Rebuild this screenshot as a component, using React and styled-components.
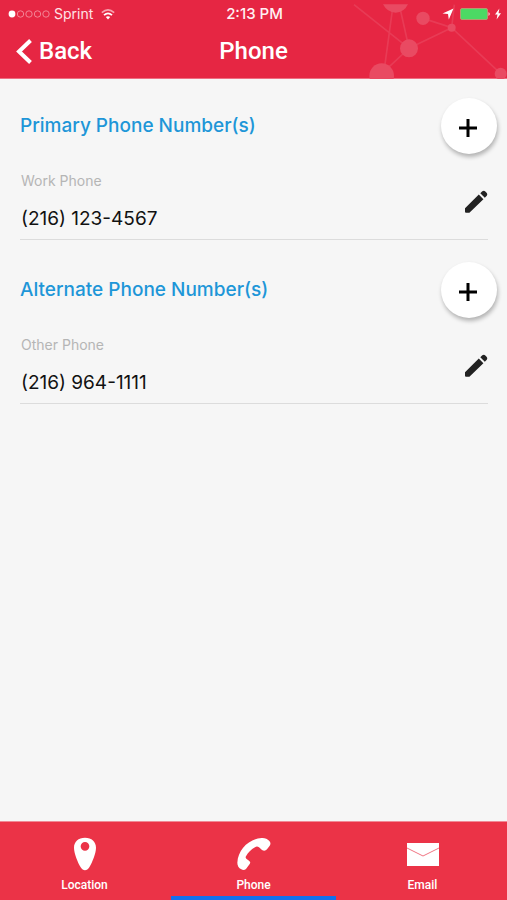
import React from "react";
import styled, { createGlobalStyle } from "styled-components";

const GlobalStyle = createGlobalStyle`
  *, *::before, *::after { box-sizing: border-box; }
  body { margin: 0; background: #f6f6f6; }
`;

const Screen = styled.div`
  display: flex;
  flex-direction: column;
  min-height: 100vh;
  background: #f6f6f6;
  color: #111;
  font-family: Inter, "Liberation Sans", sans-serif;
`;

const Header = styled.header`
  position: relative;
  background: #e62643;
  border-bottom: 1px solid #ee6e82;
  color: #fff;
`;

const Network = styled.svg`
  position: absolute;
  top: 0;
  right: 0;
  width: 167px;
  height: 79px;
  fill: #e94a62;
  stroke: #e94a62;
`;

const TripleRow = styled.div`
  position: relative;
  display: grid;
  grid-template-columns: 1fr auto 1fr;
  align-items: center;
`;

const StatusBar = styled(TripleRow)`
  height: 28px;
  padding: 0 6px 0 8px;
  font-size: 14px;
  line-height: 16px;
`;

const Carrier = styled.div`
  display: flex;
  align-items: center;
  gap: 4px;
  color: #ffe3e7;
`;

const CarrierName = styled.span`
  margin-right: 4px;
`;

const Clock = styled.time`
  font-size: 15px;
  font-weight: 500;
  color: #fff0f2;
`;

const StatusIcons = styled.div`
  display: flex;
  align-items: center;
  justify-content: flex-end;
  gap: 4px;
`;

const NavBar = styled(TripleRow)`
  height: 50px;
  padding: 0 16px 4px;
  font-family: Roboto, "Liberation Sans", sans-serif;
`;

const BackButton = styled.button`
  display: flex;
  align-items: center;
  gap: 7px;
  justify-self: start;
  padding: 0;
  border: 0;
  background: none;
  color: #fff;
  font: 500 24px/30px Roboto, "Liberation Sans", sans-serif;
  cursor: pointer;
`;

const Title = styled.h1`
  margin: 0;
  font-size: 24px;
  line-height: 30px;
  font-weight: 500;
`;

const Content = styled.main`
  flex: 1;
  padding: 19px 10px 0 20px;
`;

const Section = styled.section`
  margin-bottom: 22px;
`;

const SectionHead = styled.div`
  display: flex;
  align-items: center;
  justify-content: space-between;
`;

const SectionTitle = styled.h2`
  margin: 0;
  color: #1e96d8;
  font-size: 19px;
  line-height: 24px;
  font-weight: 500;
`;

const AddButton = styled.button`
  display: grid;
  place-items: center;
  width: 56px;
  height: 56px;
  padding: 4px 2px 0 0;
  border: 0;
  border-radius: 50%;
  background: #fff;
  box-shadow: 1px 3px 4px rgba(0, 0, 0, 0.28);
  cursor: pointer;
`;

const Entry = styled.div`
  display: flex;
  align-items: center;
  justify-content: space-between;
  height: 86px;
  margin-right: 9px;
  padding-top: 10px;
  border-bottom: 1px solid #dcdcdc;
`;

const Details = styled.dl`
  margin: 0 0 0 1px;
`;

const Label = styled.dt`
  color: #b5b5b5;
  font-size: 14px;
  line-height: 18px;
`;

const Value = styled.dd`
  margin: 17px 0 0;
  font-size: 19px;
  line-height: 24px;
`;

const EditButton = styled.button`
  display: block;
  padding: 0;
  border: 0;
  background: none;
  cursor: pointer;
`;

const TabBar = styled.nav`
  display: grid;
  grid-template-columns: repeat(3, 1fr);
  background: #eb3347;
  border-top: 1px solid #f08a96;
`;

const Tab = styled.a`
  display: flex;
  flex-direction: column;
  align-items: center;
  gap: 6px;
  height: 78px;
  margin: 0 2px;
  padding-top: 15px;
  border-bottom: 4px solid ${(p) => (p.$active ? "#1270ee" : "transparent")};
  color: #fff;
  font: 500 12px/16px Roboto, "Liberation Sans", sans-serif;
  text-decoration: none;
`;

const Icon = styled.svg`
  display: block;
  flex: none;
`;

function SignalIcon() {
  return (
    <Icon width="42" height="8" viewBox="0 0 42 8" aria-hidden="true">
      <circle cx="4" cy="4" r="3.4" fill="#fff" />
      {[12.5, 21, 29.5, 38].map((x) => (
        <circle key={x} cx={x} cy="4" r="3.2" fill="none" stroke="#f4909f" strokeWidth="0.9" />
      ))}
    </Icon>
  );
}

function WifiIcon() {
  return (
    <Icon width="14" height="11" viewBox="0 0 14 11" fill="none" aria-hidden="true">
      <path d="M.8 3.6Q7-1.9 13.2 3.6" stroke="#f6a2ae" strokeWidth="1.5" />
      <path d="M3 6.2Q7 2.6 11 6.2" stroke="#fff" strokeWidth="1.8" />
      <path d="M4.8 8.1Q7 6.2 9.2 8.1L7 10.5Z" fill="#fff" />
    </Icon>
  );
}

function NetworkArt() {
  return (
    <Network viewBox="0 0 501 237" aria-hidden="true">
      <g fill="none" strokeWidth="5" opacity="0.6">
        <path d="M42 14 207 145 335 83 482 221M158 24 132 215 207 145 180 24M249 55 335 83 343 14" />
      </g>
      <g stroke="none">
        <path d="M129 13H204Q192 38 167 38T129 13Z" />
        <circle cx="249" cy="55" r="20" />
        <circle cx="335" cy="83" r="12" />
        <circle cx="207" cy="145" r="27" />
        <circle cx="125" cy="227" r="37" />
        <circle cx="482" cy="221" r="18" />
      </g>
    </Network>
  );
}

function PinIcon() {
  return (
    <Icon width="34" height="34" viewBox="0 0 102 102" aria-hidden="true">
      <path
        fill="#fff"
        fillRule="evenodd"
        d="M51 2C31 2 18 14 18 32C18 49 29 75 38 91C45 103 57 103 64 91C73 75 84 49 84 32C84 14 71 2 51 2ZM51 15A13 13 0 1 1 51 41A13 13 0 1 1 51 15Z"
      />
    </Icon>
  );
}

function HandsetIcon() {
  return (
    <Icon width="34" height="34" viewBox="0 0 102 102" aria-hidden="true">
      <path
        fill="#fff"
        d="M74 3C83 2 91 6 97 12C102 17 101 23 97 28L90 37C86 42 80 42 75 39L66 31C62 28 58 28 54 31C42 38 33 47 27 58C25 61 26 63 28 65L36 71C40 74 41 77 38 81L27 96C23 100 17 100 13 97C5 93 1 86 1 77C3 37 37 5 74 3Z"
      />
    </Icon>
  );
}

function MailIcon() {
  return (
    <Icon width="34" height="34" viewBox="0 0 34 34" aria-hidden="true">
      <path fill="#fff" d="M1 6H33V29H1Z" />
      <path d="M1 11 17 19 33 11" fill="none" stroke="#ee6574" strokeWidth="0.9" />
    </Icon>
  );
}

const groups = [
  { title: "Primary Phone Number(s)", label: "Work Phone", number: "(216) 123-4567" },
  { title: "Alternate Phone Number(s)", label: "Other Phone", number: "(216) 964-1111" },
];

const tabs = [
  { name: "Location", Glyph: PinIcon },
  { name: "Phone", Glyph: HandsetIcon, active: true },
  { name: "Email", Glyph: MailIcon },
];

function PhoneGroup({ title, label, number }) {
  return (
    <Section>
      <SectionHead>
        <SectionTitle>{title}</SectionTitle>
        <AddButton type="button" aria-label={`Add to ${title}`}>
          <Icon width="18" height="18" viewBox="0 0 18 18" aria-hidden="true">
            <path d="M9 0V18M0 9H18" stroke="#000" strokeWidth="3" />
          </Icon>
        </AddButton>
      </SectionHead>
      <Entry>
        <Details>
          <Label>{label}</Label>
          <Value>{number}</Value>
        </Details>
        <EditButton type="button" aria-label={`Edit ${label}`}>
          <Icon width="24" height="24" viewBox="0 0 24 24" aria-hidden="true">
            <path
              fill="#222"
              d="M1 18.2 14.8 4.6 19.4 9.2 5.4 22.8H2Q1 22.8 1 21.8ZM16.3 3.2 18.3 1.3Q20 .3 21.3 1.4L22.8 3Q23.8 4.2 22.8 5.7L20.8 7.7Z"
            />
          </Icon>
        </EditButton>
      </Entry>
    </Section>
  );
}

export default function App() {
  return (
    <Screen>
      <GlobalStyle />
      <Header>
        <NetworkArt />
        <StatusBar>
          <Carrier>
            <SignalIcon />
            <CarrierName>Sprint</CarrierName>
            <WifiIcon />
          </Carrier>
          <Clock>2:13 PM</Clock>
          <StatusIcons>
            <Icon width="12" height="12" viewBox="0 0 12 12" aria-hidden="true">
              <path d="M11.5.5 6.8 11.5 6 6 .5 5.4Z" fill="#fff" />
            </Icon>
            <Icon width="33" height="14" viewBox="3 0 33 14" aria-hidden="true">
              <rect x="5.5" y="1.5" width="27" height="11" rx="1.5" fill="#4cd964" stroke="#b59a70" />
              <path d="M33.5 5Q36 7 33.5 9Z" fill="#ffd5da" />
            </Icon>
            <Icon width="6" height="12" viewBox="0 0 6 12" aria-hidden="true">
              <path d="M4.4.5 0 6.6H2.5L1.6 11.5 6 5.3H3.5Z" fill="#fff" />
            </Icon>
          </StatusIcons>
        </StatusBar>
        <NavBar>
          <BackButton type="button">
            <Icon width="16" height="26" viewBox="0 0 16 26" aria-hidden="true">
              <path d="M14.5 2.5 3 13.5 14.5 24.5" fill="none" stroke="#fff" strokeWidth="4" />
            </Icon>
            Back
          </BackButton>
          <Title>Phone</Title>
        </NavBar>
      </Header>
      <Content>
        {groups.map((g) => (
          <PhoneGroup key={g.label} {...g} />
        ))}
      </Content>
      <TabBar aria-label="Contact details">
        {tabs.map(({ name, Glyph, active }) => (
          <Tab key={name} href={`#${name.toLowerCase()}`} $active={active} aria-current={active ? "page" : undefined}>
            <Glyph />
            {name}
          </Tab>
        ))}
      </TabBar>
    </Screen>
  );
}
